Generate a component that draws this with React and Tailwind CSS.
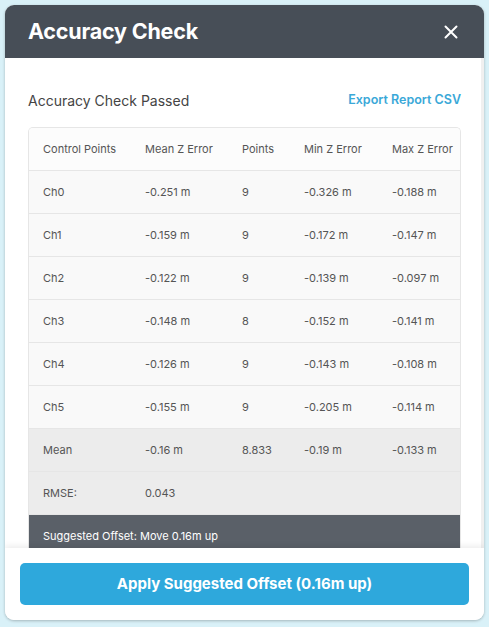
import React from "react";

const rows = [
  ["Ch0", "-0.251 m", "9", "-0.326 m", "-0.188 m"],
  ["Ch1", "-0.159 m", "9", "-0.172 m", "-0.147 m"],
  ["Ch2", "-0.122 m", "9", "-0.139 m", "-0.097 m"],
  ["Ch3", "-0.148 m", "8", "-0.152 m", "-0.141 m"],
  ["Ch4", "-0.126 m", "9", "-0.143 m", "-0.108 m"],
  ["Ch5", "-0.155 m", "9", "-0.205 m", "-0.114 m"],
];

function Row({ cells, className }) {
  return (
    <div className={"grid grid-cols-[102px_97px_62px_88px_84px] h-[43px] items-center border-b border-[#e6e6e6] " + className}>
      {cells.map((c, i) => (
        <div key={i} className="pl-[14px] whitespace-nowrap">{c}</div>
      ))}
    </div>
  );
}

export default function App() {
  return (
    <div className="w-[489px] h-[627px] bg-[#d9f1f8] p-[5px] pb-[7px] font-['Inter',sans-serif]">
      <div className="w-[479px] h-[615px] rounded-[9px] bg-white flex flex-col overflow-hidden shadow-[0_1px_3px_rgba(0,0,0,0.25)]">
        <div className="h-[53px] bg-[#474e57] flex items-center justify-between pl-[23px] pr-[26px] shrink-0">
          <span className="text-white text-[21.5px] font-bold tracking-[-0.2px]">Accuracy Check</span>
          <svg width="14" height="14" viewBox="0 0 14 14" className="text-white">
            <path d="M1.5 1.5L12.5 12.5M12.5 1.5L1.5 12.5" stroke="currentColor" strokeWidth="2" strokeLinecap="round" />
          </svg>
        </div>
        <div className="flex-1 overflow-hidden pl-[23px] pr-[20px] pt-[32px] border-r-[3px] border-[#f0f0f0]">
          <div className="flex items-center justify-between h-[20px] mb-[17px]">
            <span className="text-[14px] text-[#444]">Accuracy Check Passed</span>
            <span className="text-[12.5px] font-semibold text-[#3aa8d8]">Export Report CSV</span>
          </div>
          <div className="w-[433px] rounded-t-[5px] border border-[#e6e6e6] border-b-0 text-[11px] text-[#555] overflow-hidden">
            <Row cells={["Control Points", "Mean Z Error", "Points", "Min Z Error", "Max Z Error"]} className="bg-[#fcfcfc]" />
            {rows.map((r, i) => (
              <Row key={i} cells={r} className="bg-[#f9f9f9]" />
            ))}
            <Row cells={["Mean", "-0.16 m", "8.833", "-0.19 m", "-0.133 m"]} className="bg-[#ececec]" />
            <Row cells={["RMSE:", "0.043", "", "", ""]} className="bg-[#ececec]" />
            <div className="h-[43px] bg-[#5a6068] text-white flex items-center pl-[14px]">
              Suggested Offset: Move 0.16m up
            </div>
          </div>
        </div>
        <div className="h-[72px] shrink-0 bg-white shadow-[0_-2px_6px_rgba(0,0,0,0.08)] px-[15px] pt-[15px] relative">
          <button className="w-full h-[42px] rounded-[5px] bg-[#2ea8dc] text-white text-[15px] font-bold">
            Apply Suggested Offset (0.16m up)
          </button>
        </div>
      </div>
    </div>
  );
}
